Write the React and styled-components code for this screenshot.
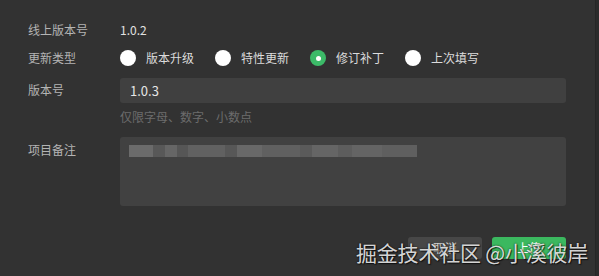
import styled, { createGlobalStyle } from 'styled-components'

const GlobalStyle = createGlobalStyle`
  html, body {
    margin: 0;
    padding: 0;
    background: #2b2b2b;
  }
  body {
    font-family: "Noto Sans CJK SC", "Noto Sans", sans-serif;
  }
`

const updateTypes = [
  { label: '版本升级', checked: false },
  { label: '特性更新', checked: false },
  { label: '修订补丁', checked: true },
  { label: '上次填写', checked: false }
]

const mosaic = [
  [24, '#6b6b6b'], [12, '#585858'], [12, '#666'], [11, '#565656'],
  [37, '#616161'], [12, '#575757'], [25, '#686868'], [38, '#606060'],
  [12, '#5a5a5a'], [26, '#656565'], [14, '#5d5d5d'], [30, '#646464'],
  [35, '#5f5f5f']
]

export default function App () {
  return (
    <>
      <GlobalStyle />
      <Panel>
        <Row $h={20}>
          <Label>线上版本号</Label>
          <Value>1.0.2</Value>
        </Row>

        <Row $h={36}>
          <Label>更新类型</Label>
          <RadioGroup>
            {updateTypes.map(t => (
              <RadioItem key={t.label}>
                <Radio checked={t.checked} />
                <RadioText>{t.label}</RadioText>
              </RadioItem>
            ))}
          </RadioGroup>
        </Row>

        <Row $h={28}>
          <Label>版本号</Label>
          <Input>1.0.3</Input>
        </Row>

        <Row $h={26}>
          <Label />
          <Hint>仅限字母、数字、小数点</Hint>
        </Row>

        <Row $top>
          <Label $top>项目备注</Label>
          <TextArea>
            <Mosaic>
              {mosaic.map(([w, c], i) => (
                <Block key={i} style={{ width: w, background: c }} />
              ))}
            </Mosaic>
          </TextArea>
        </Row>

        <Footer>
          <Button>取消</Button>
          <Button $primary>上传</Button>
        </Footer>

        <Watermark>掘金技术社区 @小溪彼岸</Watermark>
      </Panel>
    </>
  )
}

const Panel = styled.div`
  position: relative;
  width: 596px;
  height: 276px;
  background: #323232;
  border-right: 1px solid #262626;
  box-sizing: border-box;
  padding: 20px 0 0 28px;
  overflow: hidden;
`

const Row = styled.div`
  display: flex;
  align-items: ${p => (p.$top ? 'flex-start' : 'center')};
  height: ${p => (p.$h ? `${p.$h}px` : 'auto')};
  margin-top: ${p => (p.$top ? '7px' : '0')};
  width: 538px;
`

const Label = styled.div`
  flex: 0 0 92px;
  font-size: 12px;
  line-height: 20px;
  color: #b4b4b4;
  margin-top: ${p => (p.$top ? '3px' : '0')};
`

const Value = styled.div`
  font-size: 12px;
  line-height: 20px;
  color: #e2e2e2;
`

const RadioGroup = styled.div`
  display: flex;
  align-items: center;
  gap: 20px;
`

const RadioItem = styled.div`
  display: flex;
  align-items: center;
  gap: 10px;
`

const Radio = styled.span`
  width: 16px;
  height: 16px;
  border-radius: 50%;
  background: ${p => (p.checked ? '#3cba68' : '#ffffff')};
  display: flex;
  align-items: center;
  justify-content: center;
  &::after {
    content: '';
    display: ${p => (p.checked ? 'block' : 'none')};
    width: 5px;
    height: 5px;
    border-radius: 50%;
    background: #fff;
  }
`

const RadioText = styled.span`
  font-size: 12px;
  line-height: 16px;
  color: #dcdcdc;
  width: 49px;
`

const Input = styled.div`
  flex: 1;
  height: 25px;
  background: #404040;
  border-radius: 3px;
  padding-left: 10px;
  font-size: 13px;
  line-height: 25px;
  color: #e6e6e6;
`

const Hint = styled.div`
  font-size: 12px;
  line-height: 16px;
  color: #6c6c6c;
`

const TextArea = styled.div`
  flex: 1;
  height: 69px;
  background: #414141;
  border-radius: 3px;
  padding: 8px 0 0 9px;
  box-sizing: border-box;
`

const Mosaic = styled.div`
  display: flex;
  height: 12px;
  filter: blur(0.6px);
`

const Block = styled.span`
  display: block;
  height: 100%;
`

const Footer = styled.div`
  display: flex;
  justify-content: flex-end;
  gap: 10px;
  width: 538px;
  margin-top: 31px;
`

const Button = styled.div`
  width: 74px;
  height: 22px;
  border-radius: 3px;
  background: ${p => (p.$primary ? '#3bb85f' : '#474747')};
  color: ${p => (p.$primary ? '#fff' : '#cfcfcf')};
  font-size: 12px;
  line-height: 22px;
  text-align: center;
`

const Watermark = styled.div`
  position: absolute;
  left: 356px;
  top: 238px;
  font-size: 21px;
  line-height: 28px;
  letter-spacing: -0.2px;
  color: rgba(240, 240, 240, 0.9);
  text-shadow: 0 0 2px rgba(0, 0, 0, 0.8), 1px 1px 1px rgba(0, 0, 0, 0.6);
  white-space: nowrap;
  pointer-events: none;
`
